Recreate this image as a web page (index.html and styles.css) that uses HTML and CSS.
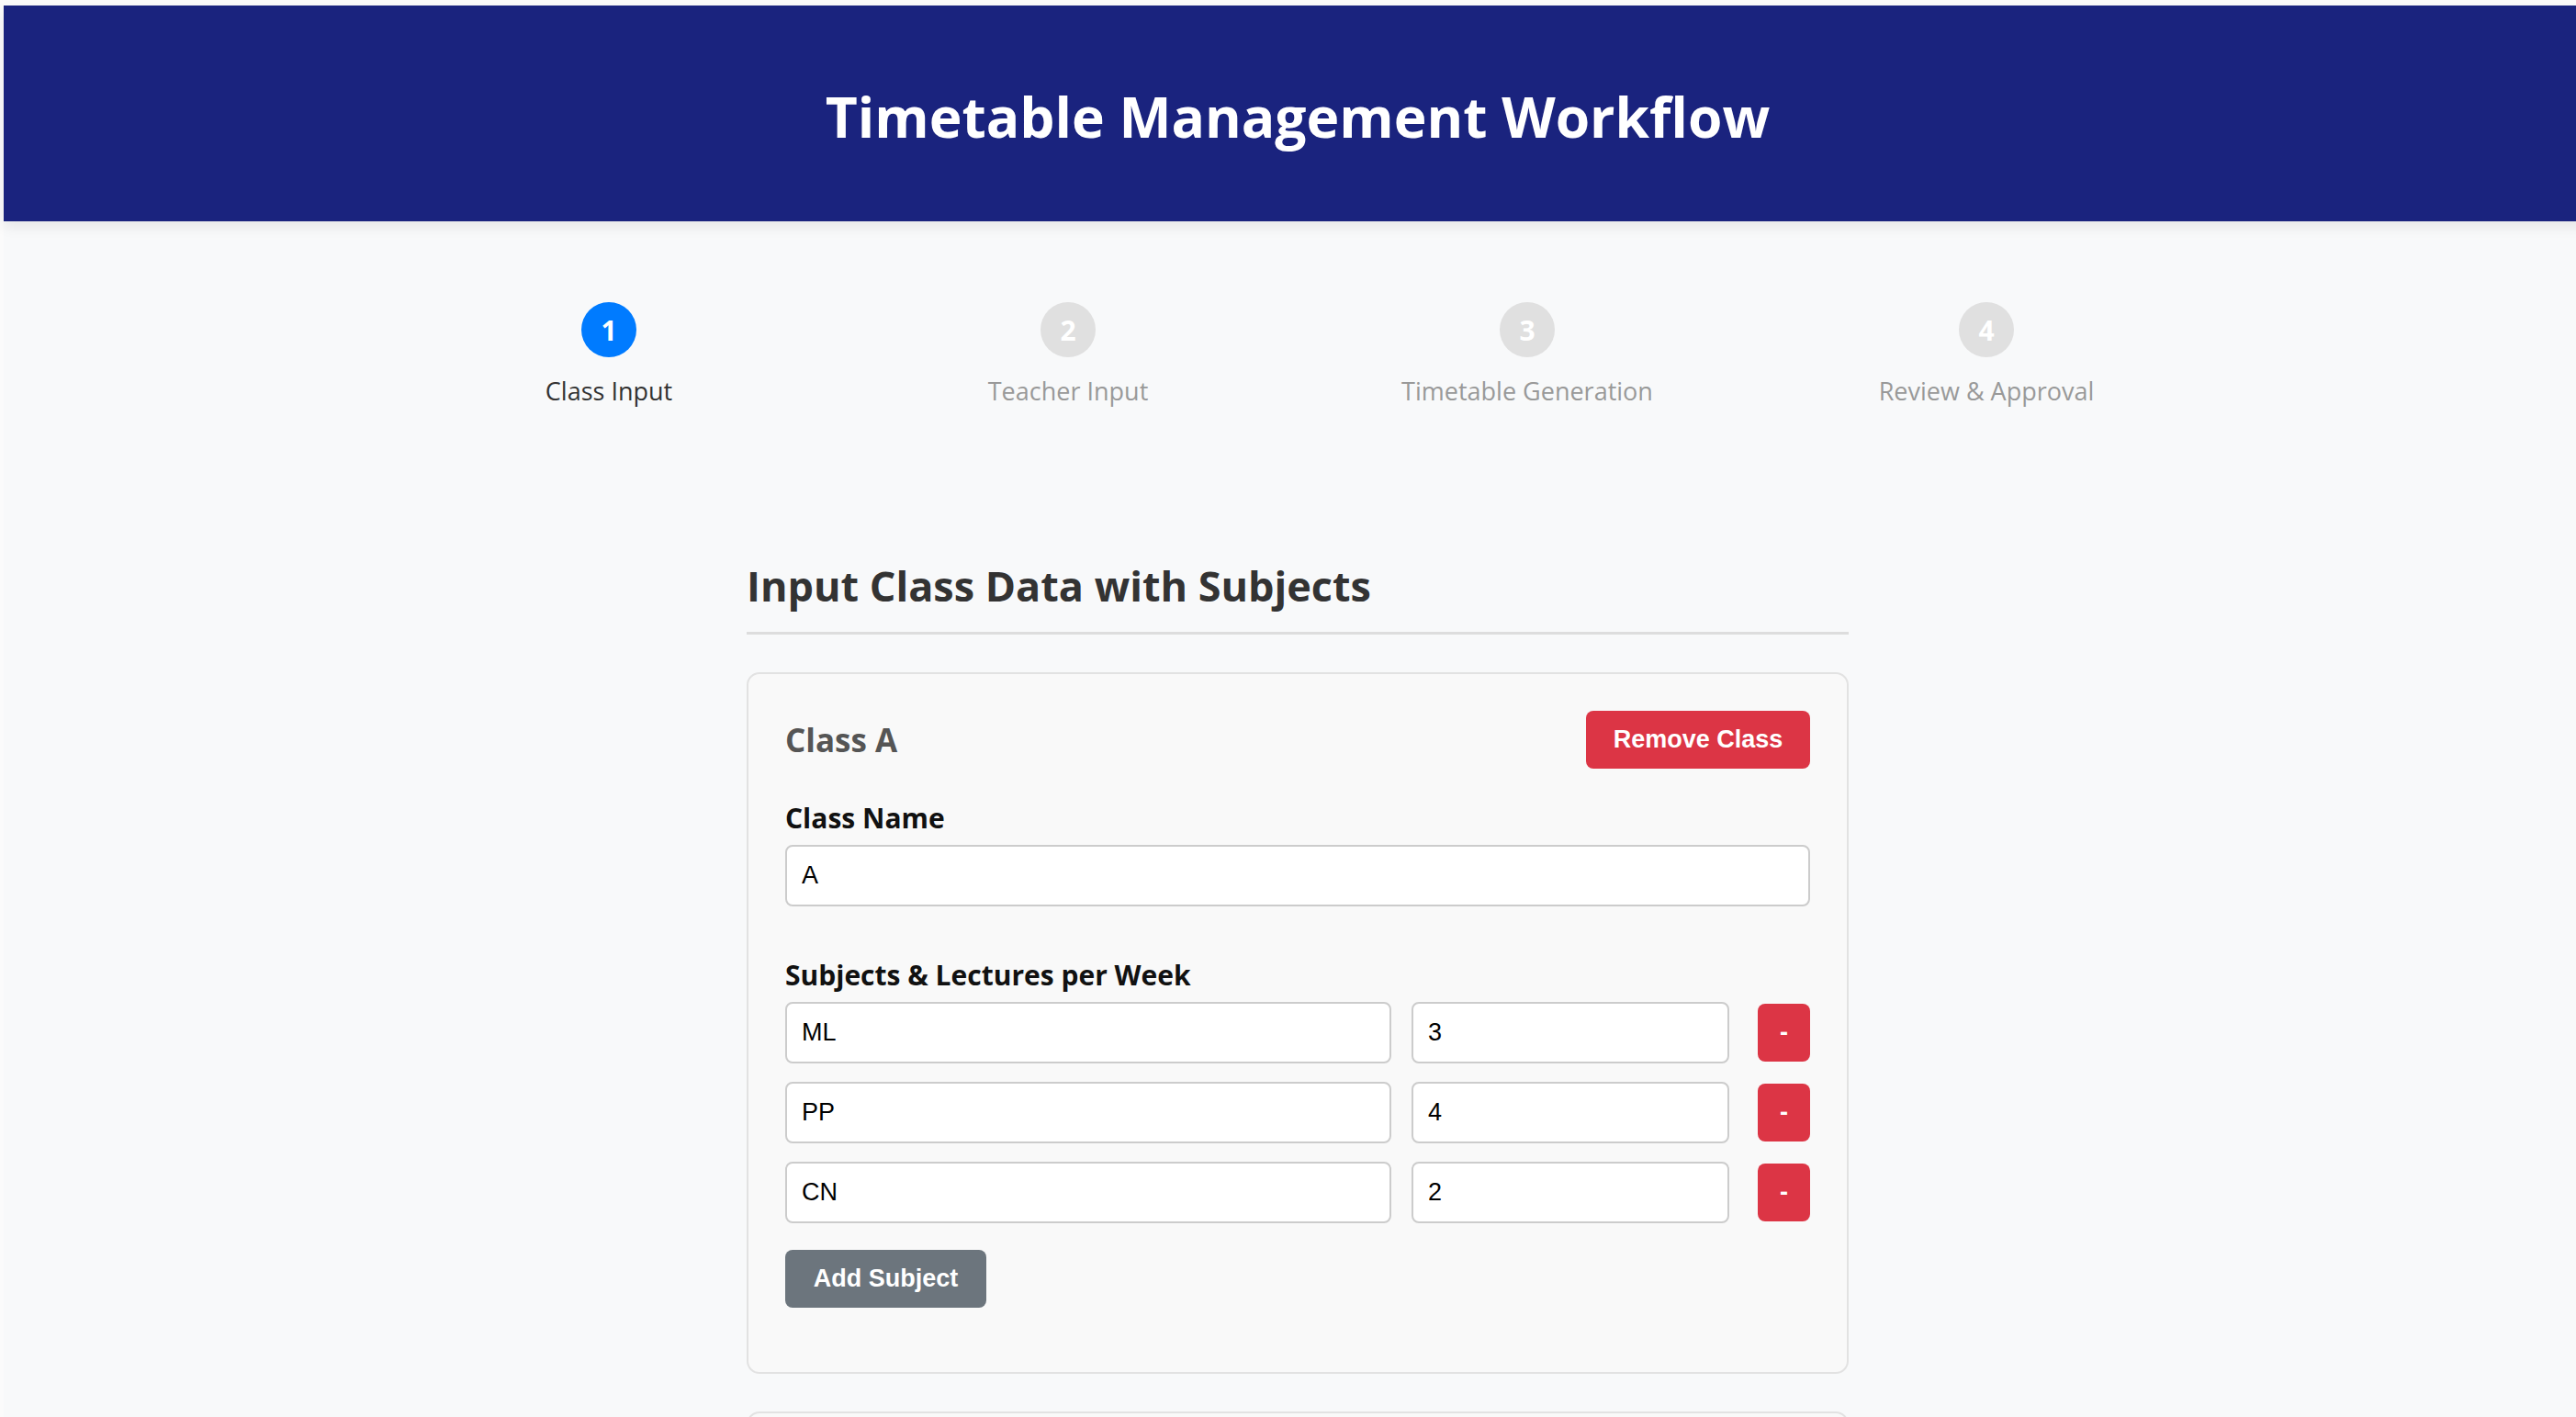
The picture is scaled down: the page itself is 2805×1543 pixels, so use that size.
FILE: index.html
```html
<!DOCTYPE html>
<html lang="en">
<head>
<meta charset="utf-8">
<title>Timetable Management Workflow</title>
<link rel="stylesheet" href="styles.css">
</head>
<body>
<div class="page">
  <header class="topbar">
    <h1 class="title">Timetable Management Workflow</h1>
  </header>

  <nav class="steps">
    <div class="step active">
      <div class="step-num">1</div>
      <div class="step-label">Class Input</div>
    </div>
    <div class="step">
      <div class="step-num">2</div>
      <div class="step-label">Teacher Input</div>
    </div>
    <div class="step">
      <div class="step-num">3</div>
      <div class="step-label">Timetable Generation</div>
    </div>
    <div class="step">
      <div class="step-num">4</div>
      <div class="step-label">Review &amp; Approval</div>
    </div>
  </nav>

  <main class="container">
    <h2 class="section-title">Input Class Data with Subjects</h2>

    <section class="class-card">
      <div class="card-head">
        <h3 class="card-title">Class A</h3>
        <button class="btn btn-danger btn-remove">Remove Class</button>
      </div>
      <div class="field">
        <label class="field-label">Class Name</label>
        <input class="text-input" type="text" value="A">
      </div>
      <div class="field subjects">
        <label class="field-label">Subjects &amp; Lectures per Week</label>
        <div class="subject-row">
          <input class="text-input subj" type="text" value="ML">
          <input class="text-input num" type="text" value="3">
          <button class="btn btn-danger btn-minus">-</button>
        </div>
        <div class="subject-row">
          <input class="text-input subj" type="text" value="PP">
          <input class="text-input num" type="text" value="4">
          <button class="btn btn-danger btn-minus">-</button>
        </div>
        <div class="subject-row">
          <input class="text-input subj" type="text" value="CN">
          <input class="text-input num" type="text" value="2">
          <button class="btn btn-danger btn-minus">-</button>
        </div>
        <button class="btn btn-secondary btn-add">Add Subject</button>
      </div>
    </section>

    <section class="class-card">
      <div class="card-head">
        <h3 class="card-title">Class B</h3>
        <button class="btn btn-danger btn-remove">Remove Class</button>
      </div>
    </section>
  </main>
</div>
</body>
</html>
```

FILE: styles.css
```css
html, body {
  margin: 0;
  height: 100%;
}
body {
  padding: 6px 0 0 4px;
  background: #fbfbfb;
  overflow: hidden;
  font-family: "Open Sans", "Noto Sans", sans-serif;
  box-sizing: border-box;
}
.page {
  width: 2818px;
  min-height: 1600px;
  background: #f8f9fa;
}
.topbar {
  height: 235px;
  box-sizing: border-box;
  padding-top: 6px;
  background: #1a237e;
  display: flex;
  align-items: center;
  justify-content: center;
  box-shadow: 0 6px 14px rgba(0, 0, 0, 0.08);
  position: relative;
}
.title {
  margin: 0;
  color: #fff;
  font-size: 60.5px;
  font-weight: 700;
  letter-spacing: 0;
}
.steps {
  width: 2000px;
  margin: 88px auto 0;
  display: flex;
}
.step {
  flex: 1;
  display: flex;
  flex-direction: column;
  align-items: center;
}
.step-num {
  width: 60px;
  height: 60px;
  border-radius: 50%;
  background: #e0e0e0;
  color: #fff;
  font-weight: 700;
  font-size: 30px;
  display: flex;
  align-items: center;
  justify-content: center;
}
.step.active .step-num {
  background: #007bff;
}
.step-label {
  margin-top: 18px;
  font-size: 27px;
  line-height: 38px;
  color: #999;
}
.step.active .step-label {
  color: #333;
}
.container {
  width: 1200px;
  margin: 165px auto 0;
}
.section-title {
  margin: 0;
  font-size: 45px;
  line-height: 55px;
  font-weight: 700;
  color: #333;
  padding-bottom: 23px;
  border-bottom: 3px solid #ddd;
}
.class-card {
  margin-top: 41px;
  background: #f9f9f9;
  border: 2px solid #e2e2e2;
  border-radius: 14px;
  padding: 40px 40px 40px;
}
.card-head {
  display: flex;
  align-items: center;
  justify-content: space-between;
}
.card-title {
  margin: 0;
  font-size: 35px;
  font-weight: 700;
  color: #555;
}
.btn {
  border: none;
  color: #fff;
  font-family: "Liberation Sans", Arial, sans-serif;
  font-weight: 700;
  font-size: 27px;
  border-radius: 8px;
  cursor: pointer;
}
.btn-danger {
  background: #dc3545;
}
.btn-secondary {
  background: #6c757d;
}
.btn-remove {
  width: 244px;
  height: 63px;
}
.field {
  margin-top: 34px;
}
.field.subjects {
  margin-top: 55px;
}
.field-label {
  display: block;
  font-size: 30px;
  line-height: 40px;
  font-weight: 700;
  color: #111;
  margin-bottom: 9px;
}
.text-input {
  display: block;
  width: 100%;
  box-sizing: border-box;
  height: 67px;
  border: 2px solid #ccc;
  border-radius: 8px;
  background: #fff;
  padding: 0 16px;
  font-family: "Liberation Sans", Arial, sans-serif;
  font-size: 27px;
  color: #000;
}
.subject-row {
  display: flex;
  align-items: center;
  margin-bottom: 20px;
}
.subject-row .subj {
  flex: 1;
  width: auto;
}
.subject-row .num {
  width: 346px;
  flex: none;
  margin-left: 22px;
}
.btn-minus {
  width: 57px;
  height: 63px;
  margin-left: 31px;
  flex: none;
  font-size: 27px;
}
.btn-add {
  margin-top: 9px;
  width: 219px;
  height: 63px;
  margin-bottom: 30px;
}
```
